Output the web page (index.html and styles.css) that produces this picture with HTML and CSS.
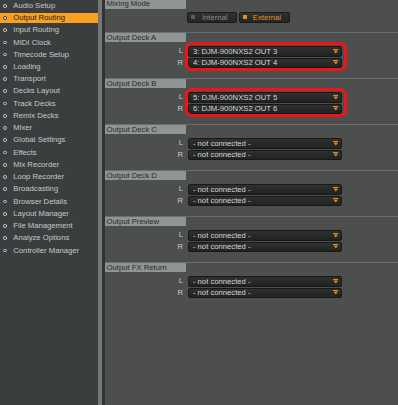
FILE: index.html
```html
<!DOCTYPE html>
<html lang="en">
<head>
<meta charset="utf-8">
<title>Preferences - Output Routing</title>
<link rel="stylesheet" href="styles.css">
</head>
<body>
<div class="app">
  <nav class="sidebar">
    <ul class="menu">
      <li class="item"><span class="dot"></span>Audio Setup</li>
      <li class="item active"><span class="dot"></span>Output Routing</li>
      <li class="item"><span class="dot"></span>Input Routing</li>
      <li class="item"><span class="dot"></span>MIDI Clock</li>
      <li class="item"><span class="dot"></span>Timecode Setup</li>
      <li class="item"><span class="dot"></span>Loading</li>
      <li class="item"><span class="dot"></span>Transport</li>
      <li class="item"><span class="dot"></span>Decks Layout</li>
      <li class="item"><span class="dot"></span>Track Decks</li>
      <li class="item"><span class="dot"></span>Remix Decks</li>
      <li class="item"><span class="dot"></span>Mixer</li>
      <li class="item"><span class="dot"></span>Global Settings</li>
      <li class="item"><span class="dot"></span>Effects</li>
      <li class="item"><span class="dot"></span>Mix Recorder</li>
      <li class="item"><span class="dot"></span>Loop Recorder</li>
      <li class="item"><span class="dot"></span>Broadcasting</li>
      <li class="item"><span class="dot"></span>Browser Details</li>
      <li class="item"><span class="dot"></span>Layout Manager</li>
      <li class="item"><span class="dot"></span>File Management</li>
      <li class="item"><span class="dot"></span>Analyze Options</li>
      <li class="item"><span class="dot"></span>Controller Manager</li>
    </ul>
  </nav>
  <div class="splitter"></div>
  <main class="content">
    <section class="section mixing">
      <div class="sec-head">Mixing Mode</div>
      <div class="toggle">
        <div class="tbtn"><span class="sq"></span>Internal</div>
        <div class="tbtn on"><span class="sq"></span>External</div>
      </div>
    </section>

    <section class="section">
      <div class="sec-head">Output Deck A</div>
      <div class="routes">
        <span class="ch">L</span>
        <div class="select"><span>3: DJM-900NXS2 OUT 3</span><svg class="arrow" viewBox="0 0 6 5"><rect x="0" y="0" width="6" height="1.3" fill="#f08a1c"/><path d="M0.7 2H5.3L3 4.8Z" fill="#f08a1c"/></svg></div>
        <span class="ch">R</span>
        <div class="select"><span>4: DJM-900NXS2 OUT 4</span><svg class="arrow" viewBox="0 0 6 5"><rect x="0" y="0" width="6" height="1.3" fill="#f08a1c"/><path d="M0.7 2H5.3L3 4.8Z" fill="#f08a1c"/></svg></div>
      </div>
      <div class="highlight"></div>
    </section>

    <section class="section">
      <div class="sec-head">Output Deck B</div>
      <div class="routes">
        <span class="ch">L</span>
        <div class="select"><span>5: DJM-900NXS2 OUT 5</span><svg class="arrow" viewBox="0 0 6 5"><rect x="0" y="0" width="6" height="1.3" fill="#f08a1c"/><path d="M0.7 2H5.3L3 4.8Z" fill="#f08a1c"/></svg></div>
        <span class="ch">R</span>
        <div class="select"><span>6: DJM-900NXS2 OUT 6</span><svg class="arrow" viewBox="0 0 6 5"><rect x="0" y="0" width="6" height="1.3" fill="#f08a1c"/><path d="M0.7 2H5.3L3 4.8Z" fill="#f08a1c"/></svg></div>
      </div>
      <div class="highlight"></div>
    </section>

    <section class="section">
      <div class="sec-head">Output Deck C</div>
      <div class="routes">
        <span class="ch">L</span>
        <div class="select"><span>- not connected -</span><svg class="arrow" viewBox="0 0 6 5"><rect x="0" y="0" width="6" height="1.3" fill="#f08a1c"/><path d="M0.7 2H5.3L3 4.8Z" fill="#f08a1c"/></svg></div>
        <span class="ch">R</span>
        <div class="select"><span>- not connected -</span><svg class="arrow" viewBox="0 0 6 5"><rect x="0" y="0" width="6" height="1.3" fill="#f08a1c"/><path d="M0.7 2H5.3L3 4.8Z" fill="#f08a1c"/></svg></div>
      </div>
    </section>

    <section class="section">
      <div class="sec-head">Output Deck D</div>
      <div class="routes">
        <span class="ch">L</span>
        <div class="select"><span>- not connected -</span><svg class="arrow" viewBox="0 0 6 5"><rect x="0" y="0" width="6" height="1.3" fill="#f08a1c"/><path d="M0.7 2H5.3L3 4.8Z" fill="#f08a1c"/></svg></div>
        <span class="ch">R</span>
        <div class="select"><span>- not connected -</span><svg class="arrow" viewBox="0 0 6 5"><rect x="0" y="0" width="6" height="1.3" fill="#f08a1c"/><path d="M0.7 2H5.3L3 4.8Z" fill="#f08a1c"/></svg></div>
      </div>
    </section>

    <section class="section">
      <div class="sec-head">Output Preview</div>
      <div class="routes">
        <span class="ch">L</span>
        <div class="select"><span>- not connected -</span><svg class="arrow" viewBox="0 0 6 5"><rect x="0" y="0" width="6" height="1.3" fill="#f08a1c"/><path d="M0.7 2H5.3L3 4.8Z" fill="#f08a1c"/></svg></div>
        <span class="ch">R</span>
        <div class="select"><span>- not connected -</span><svg class="arrow" viewBox="0 0 6 5"><rect x="0" y="0" width="6" height="1.3" fill="#f08a1c"/><path d="M0.7 2H5.3L3 4.8Z" fill="#f08a1c"/></svg></div>
      </div>
    </section>

    <section class="section">
      <div class="sec-head">Output FX Return</div>
      <div class="routes">
        <span class="ch">L</span>
        <div class="select"><span>- not connected -</span><svg class="arrow" viewBox="0 0 6 5"><rect x="0" y="0" width="6" height="1.3" fill="#f08a1c"/><path d="M0.7 2H5.3L3 4.8Z" fill="#f08a1c"/></svg></div>
        <span class="ch">R</span>
        <div class="select"><span>- not connected -</span><svg class="arrow" viewBox="0 0 6 5"><rect x="0" y="0" width="6" height="1.3" fill="#f08a1c"/><path d="M0.7 2H5.3L3 4.8Z" fill="#f08a1c"/></svg></div>
      </div>
    </section>
  </main>
</div>
</body>
</html>
```

FILE: styles.css
```css
* {
  box-sizing: border-box;
}

html,
body {
  margin: 0;
  padding: 0;
  height: 100%;
}

body {
  background: #4d4e4e;
  font-family: "Liberation Sans", Arial, sans-serif;
  font-size: 7.7px;
  overflow: hidden;
}

.app {
  display: flex;
  height: 405px;
}

/* ---------- sidebar ---------- */
.sidebar {
  width: 98px;
  flex: none;
  background: #3b3e3f;
}

.menu {
  list-style: none;
  margin: 0;
  padding: 0.4px 0 0;
}

.item {
  height: 10.6px;
  margin-bottom: 1.65px;
  display: flex;
  align-items: center;
  padding-left: 3.3px;
  color: #c5c9c9;
  white-space: nowrap;
  line-height: 1;
}

.dot {
  flex: none;
  width: 3.7px;
  height: 3.7px;
  border: 1.2px solid #c9cdcd;
  border-radius: 50%;
  margin-right: 6.3px;
}

.item.active {
  background: #f7a021;
  color: #1c1c1c;
}

.item.active .dot {
  border-color: #2a2a2a;
  background: #f3e6d2;
}

.splitter {
  width: 7px;
  flex: none;
  background: linear-gradient(to right, #727777 0, #727777 4.4px, #313333 4.4px, #313333 100%);
}

/* ---------- content ---------- */
.content {
  flex: 1;
  min-width: 0;
}

.section {
  position: relative;
  height: 46px;
  border-top: 1px solid #6b6e6e;
}

.section.mixing {
  margin-top: -1.8px;
  height: 33.5px;
}

.sec-head {
  width: 81px;
  height: 9.5px;
  line-height: 9.5px;
  padding-left: 1.5px;
  background: #8f9494;
  color: #2a2c2d;
  white-space: nowrap;
}

.toggle {
  display: flex;
  gap: 1.7px;
  margin: 3.6px 0 0 82.3px;
}

.tbtn {
  width: 50px;
  height: 10.4px;
  display: flex;
  align-items: center;
  padding-left: 3px;
  background: linear-gradient(#303131, #242525);
  border: 1px solid #1a1b1b;
  border-radius: 2px;
  color: #8b8e8e;
  white-space: nowrap;
}

.tbtn.on {
  width: 51px;
  color: #ec922c;
}

.sq {
  flex: none;
  width: 4px;
  height: 4px;
  margin-right: 6.6px;
  background: #5a5c5c;
}

.tbtn.on .sq {
  background: #f7891c;
  margin-right: 5.8px;
}

.routes {
  display: grid;
  grid-template-columns: 78px 154.5px;
  column-gap: 4.5px;
  row-gap: 1px;
  margin-top: 3.8px;
}

.ch {
  text-align: right;
  line-height: 10.5px;
  color: #c9cccc;
}

.select {
  height: 10.5px;
  display: flex;
  align-items: center;
  justify-content: space-between;
  padding: 0 2.6px 0 4.4px;
  border: 1px solid #171818;
  border-radius: 2px;
  background: linear-gradient(#2f3030, #212222);
  color: #d6d8d8;
  white-space: nowrap;
}

.arrow {
  width: 5.6px;
  height: 4.6px;
  flex: none;
}

.highlight {
  position: absolute;
  left: 80px;
  top: 9.3px;
  width: 162.3px;
  height: 29px;
  border: 3.6px solid #f21414;
  border-radius: 7px;
  pointer-events: none;
}
```
